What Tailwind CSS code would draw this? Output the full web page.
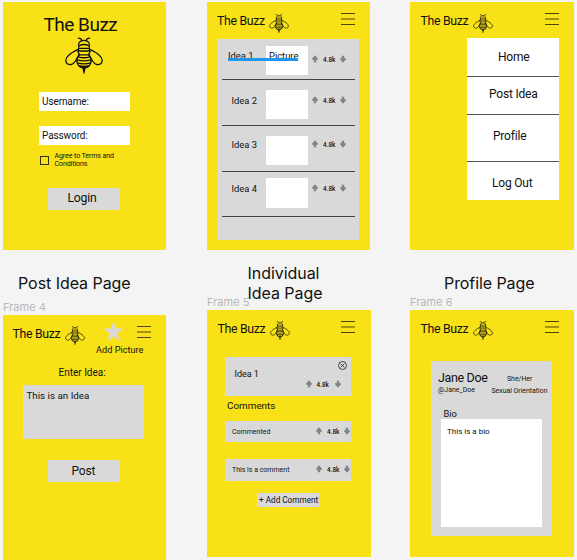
<!DOCTYPE html>
<html lang="en">
<head>
<meta charset="utf-8">
<title>The Buzz</title>
<script src="https://cdn.jsdelivr.net/npm/@tailwindcss/browser@4"></script>
</head>
<body class="w-[577px] h-[560px] overflow-hidden bg-[#f4f4f4] text-[#111] font-['Roboto',sans-serif] whitespace-nowrap">
<svg class="hidden">
  <symbol id="bee" viewBox="0 0 38 37">
    <g fill="none" stroke="currentColor" stroke-linecap="round" stroke-linejoin="round">
      <path d="M13.500 1.200c2 0 3 .8 3.400 2.400M24.500 1.200c-2 0-3 .8-3.400 2.400"/>
      <path d="M13.800 10.500c-1.200-4.500 1.200-7.200 5.200-7.200s6.400 2.700 5.200 7.200M14.200 8.800c3-1.600 6.600-1.600 9.600 0"/>
      <path d="M14 11.300h10l1.200 3-1.600 3.500h-9.200l-1.600-3.500zM14 14h10"/>
      <path d="M13.500 12.200C8 14.800 1 18.800.8 23.200c-.1 3.200 2.600 5 5.600 4.300 3.600-.8 5.400-5.800 7.600-9.800M24.500 12.200c5.500 2.600 12.500 6.600 12.700 11 .1 3.200-2.600 5-5.600 4.300-3.600-.8-5.400-5.800-7.600-9.800"/>
      <path d="M14.400 17.800c-2.600 2.400-3.200 6-1.600 9.400 1.200 2.500 3.700 3.600 6.200 3.600s5-1.100 6.200-3.600c1.600-3.400 1-7-1.600-9.400M13.200 19.800c3.700 1.200 7.900 1.200 11.600 0M12.300 22.800c4.300 1.300 9.100 1.300 13.400 0M12.500 25.800c4.100 1.300 8.900 1.300 13 0M14 28.700c3.200 1 6.800 1 10 0"/>
    </g>
    <path d="M17.300 30.800h3.400l-1.300 6h-.8z" fill="currentColor"/>
  </symbol>
  <symbol id="menu" viewBox="0 0 14 13">
    <path d="M0 1.500h14M0 7h14M0 12.500h14" stroke="#4c4608" stroke-width="1" fill="none"/>
  </symbol>
  <symbol id="up" viewBox="0 0 6 8">
    <path d="M3 .3 6 3.700V4.700H4.200V7.300H1.800V4.700H0V3.700z" fill="#808386"/>
  </symbol>
  <symbol id="down" viewBox="0 0 6 8">
    <path d="M3 7.700 0 4.300V3.300H1.800V.7H4.200V3.300H6V4.300z" fill="#808386"/>
  </symbol>
</svg>

<div class="flex items-start pl-[3px] pt-[2px]">

  <!-- Column 1 -->
  <div class="w-[163px] shrink-0">
    <section class="h-[248px] bg-[#f8e217] flex flex-col items-start">
      <div class="mt-[12px] ml-[40.500px] h-[22px] leading-[22px] text-[19px] tracking-[-0.500px]">The Buzz</div>
      <svg class="mt-[1px] ml-[62px] w-[38px] h-[37px] stroke-[1.300]"><use href="#bee"/></svg>
      <div class="mt-[18px] ml-[36px] w-[91px] h-[19px] bg-white pl-[3px] leading-[20px] text-[10px] tracking-[-0.100px]">Username:</div>
      <div class="mt-[15px] ml-[36px] w-[91px] h-[19px] bg-white pl-[3px] leading-[20px] text-[10px] tracking-[-0.100px]">Password:</div>
      <div class="mt-[7px] ml-[37px] flex">
        <span class="mt-[4px] w-[9px] h-[9px] border border-[#333008]"></span>
        <span class="ml-[5.500px] text-[7.100px] leading-[8px] tracking-[-0.120px]">Agree to Terms and<br>Conditions</span>
      </div>
      <div class="mt-[20px] ml-[45px] w-[72px] h-[22px] bg-[#d9d9d9] pl-[19.500px] leading-[21px] text-[12.200px] tracking-[-0.200px]">Login</div>
    </section>
    <h2 class="mt-[23px] ml-[15px] h-[20px] leading-[20px] text-[16px] tracking-[-0.050px] font-['Inter',sans-serif]">Post Idea Page</h2>
    <div class="mt-[8px] h-[12px] leading-[12px] text-[11px] text-[#b8b8b8] font-['Inter',sans-serif]">Frame 4</div>
    <section class="mt-[2px] h-[245px] bg-[#f8e217] flex flex-col items-start">
      <div class="flex items-start pl-[9.500px] h-[29px]">
        <span class="mt-[11px] w-[52px] leading-[16px] text-[12.300px] tracking-[-0.300px]">The Buzz</span>
        <svg class="mt-[11px] w-[20px] h-[19px] stroke-[1.350]"><use href="#bee"/></svg>
        <svg class="ml-[18px] mt-[6px] w-[21px] h-[20px]" viewBox="0 0 21 19" preserveAspectRatio="none"><path d="M10.500 0 12.900 7.200H20.500L14.400 11.700 16.700 19 10.500 14.500 4.300 19 6.600 11.700.5 7.200H8.100z" fill="#d9d9d9"/></svg>
        <svg class="ml-[13px] mt-[10px] w-[14px] h-[13px]"><use href="#menu"/></svg>
      </div>
      <div class="mt-[1px] ml-[93px] leading-[10px] text-[9.200px]">Add Picture</div>
      <div class="mt-[12px] ml-[55.500px] leading-[12px] text-[10px]">Enter Idea:</div>
      <div class="mt-[6px] ml-[20px] w-[121px] h-[54px] bg-[#d9d9d9] pt-[4px] pl-[3.500px] leading-[13px] text-[9.800px]">This is an Idea</div>
      <div class="mt-[21px] ml-[45px] w-[72px] h-[22px] bg-[#d9d9d9] pl-[23.500px] leading-[22px] text-[12px] tracking-[-0.200px]">Post</div>
    </section>
  </div>

  <!-- Column 2 -->
  <div class="ml-[41px] w-[164px] shrink-0">
    <section class="w-[163px] h-[248px] bg-[#f8e217]">
      <div class="flex items-start pl-[10px] h-[37px]">
        <span class="mt-[11px] w-[52px] leading-[16px] text-[12.300px] tracking-[-0.300px]">The Buzz</span>
        <svg class="mt-[12px] w-[20px] h-[19px] stroke-[1.350]"><use href="#bee"/></svg>
        <svg class="ml-[52px] mt-[10px] w-[14px] h-[13px]"><use href="#menu"/></svg>
      </div>
      <div class="ml-[10px] w-[142px] h-[201px] bg-[#d9d9d9] pl-[5px] pr-[4px] text-[9.400px]">
        <div class="relative h-[41px] border-b border-[#444] flex items-start">
          <span class="mt-[11px] ml-[6px] w-[38px] leading-[12px]">Idea 1</span>
          <span class="mt-[7px] w-[42px] h-[29px] bg-white pl-[3px] pt-[4px] leading-[12px]">Picture</span>
          <span class="mt-[16px] ml-[4px] flex items-start h-[8px] leading-[10px] text-[6.400px] font-medium"><svg class="w-[6px] h-[8px]"><use href="#up"/></svg><span class="ml-[5px] w-[17px]">4.8k</span><svg class="w-[6px] h-[8px]"><use href="#down"/></svg></span>
          <span class="absolute left-[6px] top-[19px] w-[70px] h-[3px] bg-[#2196ee]"></span>
        </div>
        <div class="h-[46px] border-b border-[#444] flex items-start">
          <span class="mt-[15px] ml-[9.500px] w-[34.500px] leading-[12px]">Idea 2</span>
          <span class="mt-[10px] w-[42px] h-[29px] bg-white"></span>
          <span class="mt-[16px] ml-[4px] flex items-start h-[8px] leading-[10px] text-[6.400px] font-medium"><svg class="w-[6px] h-[8px]"><use href="#up"/></svg><span class="ml-[5px] w-[17px]">4.8k</span><svg class="w-[6px] h-[8px]"><use href="#down"/></svg></span>
        </div>
        <div class="h-[46px] border-b border-[#444] flex items-start">
          <span class="mt-[13px] ml-[9.500px] w-[34.500px] leading-[12px]">Idea 3</span>
          <span class="mt-[10px] w-[42px] h-[29px] bg-white"></span>
          <span class="mt-[14px] ml-[4px] flex items-start h-[8px] leading-[10px] text-[6.400px] font-medium"><svg class="w-[6px] h-[8px]"><use href="#up"/></svg><span class="ml-[5px] w-[17px]">4.8k</span><svg class="w-[6px] h-[8px]"><use href="#down"/></svg></span>
        </div>
        <div class="h-[45px] border-b border-[#444] flex items-start">
          <span class="mt-[11px] ml-[9.500px] w-[34.500px] leading-[12px]">Idea 4</span>
          <span class="mt-[6px] w-[42px] h-[30px] bg-white"></span>
          <span class="mt-[12px] ml-[4px] flex items-start h-[8px] leading-[10px] text-[6.400px] font-medium"><svg class="w-[6px] h-[8px]"><use href="#up"/></svg><span class="ml-[5px] w-[17px]">4.8k</span><svg class="w-[6px] h-[8px]"><use href="#down"/></svg></span>
        </div>
      </div>
    </section>
    <h2 class="mt-[14px] ml-[40.500px] h-[38px] leading-[19.500px] text-[16px] tracking-[-0.050px] font-['Inter',sans-serif]">Individual<br>Idea Page</h2>
    <div class="-mt-[6px] h-[12px] leading-[12px] text-[11px] text-[#b8b8b8] font-['Inter',sans-serif]">Frame 5</div>
    <section class="mt-[2px] h-[247px] bg-[#f8e217] flex flex-col items-start">
      <div class="flex items-start pl-[10.500px] h-[47px]">
        <span class="mt-[11px] w-[52px] leading-[16px] text-[12.300px] tracking-[-0.300px]">The Buzz</span>
        <svg class="mt-[11px] w-[20px] h-[19px] stroke-[1.350]"><use href="#bee"/></svg>
        <svg class="ml-[51.500px] mt-[10px] w-[14px] h-[13px]"><use href="#menu"/></svg>
      </div>
      <div class="ml-[18px] w-[126px] h-[39px] bg-[#d9d9d9]">
        <div class="flex items-start h-[23px]">
          <span class="mt-[11px] ml-[9.500px] w-[103px] leading-[12px] text-[9px] tracking-[-0.050px]">Idea 1</span>
          <svg class="mt-[4px] w-[9px] h-[9px]" viewBox="0 0 9 9"><g fill="none" stroke="#222" stroke-width=".8"><circle cx="4.500" cy="4.500" r="4"/><path d="m2.600 2.600 3.800 3.800m0-3.800L2.600 6.400"/></g></svg>
        </div>
        <div class="ml-[80.500px] flex items-start h-[8px] leading-[10px] text-[6.400px] font-medium"><svg class="w-[6px] h-[8px]"><use href="#up"/></svg><span class="ml-[5px] w-[18px]">4.8k</span><svg class="w-[6px] h-[8px]"><use href="#down"/></svg></div>
      </div>
      <div class="mt-[4px] ml-[20px] leading-[12px] text-[9.900px]">Comments</div>
      <div class="mt-[9px] ml-[18px] w-[126px] h-[21px] bg-[#d9d9d9] flex items-start">
        <span class="mt-[6px] ml-[7px] w-[84px] leading-[10px] text-[7px]">Commented</span>
        <span class="mt-[6px] flex items-start h-[8px] leading-[10px] text-[6.400px] font-medium"><svg class="w-[6px] h-[8px]"><use href="#up"/></svg><span class="ml-[5px] w-[17px]">4.8k</span><svg class="w-[6px] h-[8px]"><use href="#down"/></svg></span>
      </div>
      <div class="mt-[17px] ml-[18px] w-[126px] h-[22px] bg-[#d9d9d9] flex items-start">
        <span class="mt-[6px] ml-[7px] w-[84px] leading-[10px] text-[7px]">This is a comment</span>
        <span class="mt-[6px] flex items-start h-[8px] leading-[10px] text-[6.400px] font-medium"><svg class="w-[6px] h-[8px]"><use href="#up"/></svg><span class="ml-[5px] w-[17px]">4.8k</span><svg class="w-[6px] h-[8px]"><use href="#down"/></svg></span>
      </div>
      <div class="mt-[12px] ml-[50px] w-[62px] h-[14px] bg-[#d9d9d9] pl-[2px] leading-[15px] text-[8.200px]">+ Add Comment</div>
    </section>
  </div>

  <!-- Column 3 -->
  <div class="ml-[39px] w-[164px] shrink-0">
    <section class="h-[248px] bg-[#f8e217]">
      <div class="flex items-start pl-[10.500px] h-[36px]">
        <span class="mt-[11px] w-[52px] leading-[16px] text-[12.300px] tracking-[-0.300px]">The Buzz</span>
        <svg class="mt-[12px] w-[20px] h-[19px] stroke-[1.350]"><use href="#bee"/></svg>
        <svg class="ml-[52px] mt-[10px] w-[14px] h-[13px]"><use href="#menu"/></svg>
      </div>
      <div class="ml-[57px] w-[92px] h-[162px] bg-white text-[12px] tracking-[-0.200px]">
        <div class="h-[39px] border-b border-[#555] pl-[31px] leading-[39px]">Home</div>
        <div class="h-[38px] border-b border-[#555] pl-[22px] leading-[35px]">Post Idea</div>
        <div class="h-[47px] border-b border-[#555] pl-[26px] leading-[43px]">Profile</div>
        <div class="pl-[25px] leading-[43px]">Log Out</div>
      </div>
    </section>
    <h2 class="mt-[23px] ml-[34px] h-[20px] leading-[20px] text-[16px] tracking-[-0.080px] font-['Inter',sans-serif]">Profile Page</h2>
    <div class="mt-[3px] h-[12px] leading-[12px] text-[11px] text-[#b8b8b8] font-['Inter',sans-serif]">Frame 6</div>
    <section class="mt-[2px] h-[247px] bg-[#f8e217]">
      <div class="flex items-start pl-[10.500px] h-[51px]">
        <span class="mt-[11px] w-[52px] leading-[16px] text-[12.300px] tracking-[-0.300px]">The Buzz</span>
        <svg class="mt-[11px] w-[20px] h-[19px] stroke-[1.350]"><use href="#bee"/></svg>
        <svg class="ml-[52px] mt-[10px] w-[14px] h-[13px]"><use href="#menu"/></svg>
      </div>
      <div class="ml-[21px] w-[121px] h-[175px] bg-[#d9d9d9]">
        <div class="flex h-[47px] pl-[7px]">
          <div class="w-[53.500px] pt-[9px]">
            <div class="leading-[15px] text-[12.500px] tracking-[-0.350px]">Jane Doe</div>
            <div class="leading-[10px] text-[7px]">@Jane_Doe</div>
          </div>
          <div class="pt-[12px] text-[6.900px]">
            <div class="pl-[15.500px] leading-[12px]">She/Her</div>
            <div class="leading-[13px]">Sexual Orientation</div>
          </div>
        </div>
        <div class="pl-[12.500px] h-[11px] leading-[11px] text-[9.400px]">Bio</div>
        <div class="ml-[10px] w-[101px] h-[108px] bg-white pt-[7px] pl-[6px] leading-[11px] text-[8px]">This is a bio</div>
      </div>
    </section>
  </div>
</div>
</body>
</html>
